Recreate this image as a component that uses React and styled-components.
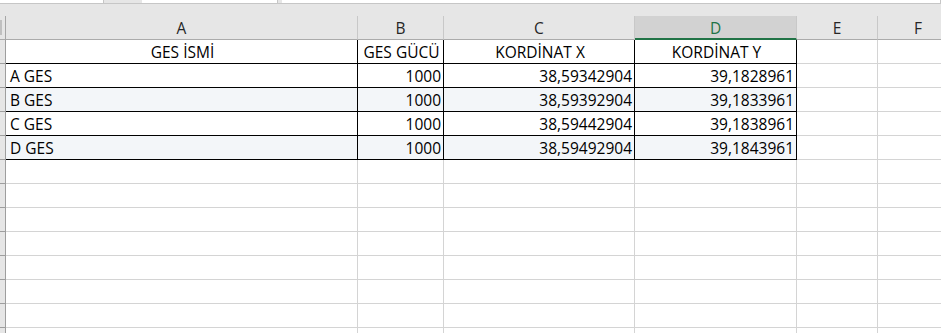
import React from 'react';
import styled, { createGlobalStyle, css } from 'styled-components';

const GlobalStyle = createGlobalStyle`
  html, body {
    margin: 0;
    padding: 0;
    background: #ffffff;
    overflow: hidden;
  }
  body {
    font-family: "Open Sans", "Noto Sans", sans-serif;
  }
`;

const COLS = '6px 352px 86px 191px 162px 81px 81px';

const columns = ['A', 'B', 'C', 'D', 'E', 'F'];

const rows = [
  ['GES İSMİ', 'GES GÜCÜ', 'KORDİNAT X', 'KORDİNAT Y'],
  ['A GES', '1000', '38,59342904', '39,1828961'],
  ['B GES', '1000', '38,59392904', '39,1833961'],
  ['C GES', '1000', '38,59442904', '39,1838961'],
  ['D GES', '1000', '38,59492904', '39,1843961'],
];

const EMPTY_ROWS = 8;

const App = () => {
  return (
    <>
      <GlobalStyle />
      <Window>
        <TabStrip>
          <Tab $w={104} />
          <TabGap $w={38} />
          <Tab $w={136} />
          <TabGap $w={4} />
          <Tab $grow />
        </TabStrip>
        <Spacer />
        <Grid>
          <Corner>
            <CornerMark />
          </Corner>
          {columns.map((c) => (
            <ColHead key={c} $active={c === 'D'}>{c}</ColHead>
          ))}

          {rows.map((r, ri) => (
            <React.Fragment key={ri}>
              <RowHead />
              {r.map((val, ci) => (
                <Cell
                  key={ci}
                  $framed
                  $shade={ri === 2 || ri === 4}
                  $align={ri === 0 ? 'center' : ci === 0 ? 'left' : 'right'}
                >
                  {val}
                </Cell>
              ))}
              <Cell />
              <Cell />
            </React.Fragment>
          ))}

          {Array.from({ length: EMPTY_ROWS }).map((_, i) => (
            <React.Fragment key={'e' + i}>
              <RowHead />
              {columns.map((c) => (
                <Cell key={c} />
              ))}
            </React.Fragment>
          ))}
        </Grid>
      </Window>
    </>
  );
};

const Window = styled.div`
  width: 941px;
  height: 333px;
  overflow: hidden;
  background: #e6e6e6;
`;

const TabStrip = styled.div`
  display: flex;
  height: 3px;
  border-bottom: 1px solid #c6c6c6;
`;

const Tab = styled.div`
  background: #ffffff;
  height: 3px;
  box-sizing: border-box;
  border-right: 1px solid #c6c6c6;
  ${(p) => (p.$grow ? css`flex: 1;` : css`width: ${p.$w}px;`)}
`;

const TabGap = styled.div`
  width: ${(p) => p.$w}px;
  background: #e6e6e6;
`;

const Spacer = styled.div`
  height: 12px;
`;

const Grid = styled.div`
  display: grid;
  grid-template-columns: ${COLS};
  grid-auto-rows: 24px;
  width: max-content;
  background: #ffffff;
  font-size: 15.5px;
  color: #000000;
`;

const Corner = styled.div`
  background: #e6e6e6;
  border-right: 1px solid #a6a6a6;
  border-bottom: 1px solid #ababab;
  position: relative;
`;

const CornerMark = styled.div`
  position: absolute;
  left: 0;
  top: 4px;
  width: 2px;
  height: 15px;
  background: #c0c0c0;
`;

const ColHead = styled.div`
  display: flex;
  align-items: center;
  justify-content: center;
  padding-top: 1px;
  background: ${(p) => (p.$active ? '#d2d2d2' : '#e6e6e6')};
  color: ${(p) => (p.$active ? '#217346' : '#262626')};
  border-right: 1px solid #c8c8c8;
  border-bottom: ${(p) => (p.$active ? '2px solid #217346' : '1px solid #ababab')};
`;

const RowHead = styled.div`
  background: #e6e6e6;
  border-right: 1px solid #9e9e9e;
  border-bottom: 1px solid #9e9e9e;
`;

const Cell = styled.div`
  display: flex;
  align-items: center;
  padding: 0 2px 0 4px;
  white-space: nowrap;
  overflow: hidden;
  justify-content: ${(p) =>
    p.$align === 'center' ? 'center' : p.$align === 'right' ? 'flex-end' : 'flex-start'};
  background: ${(p) => (p.$shade ? '#f3f6f9' : '#ffffff')};
  border-right: 1px solid ${(p) => (p.$framed ? '#000000' : '#d4d4d4')};
  border-bottom: 1px solid ${(p) => (p.$framed ? '#000000' : '#d4d4d4')};
`;

export default App;
